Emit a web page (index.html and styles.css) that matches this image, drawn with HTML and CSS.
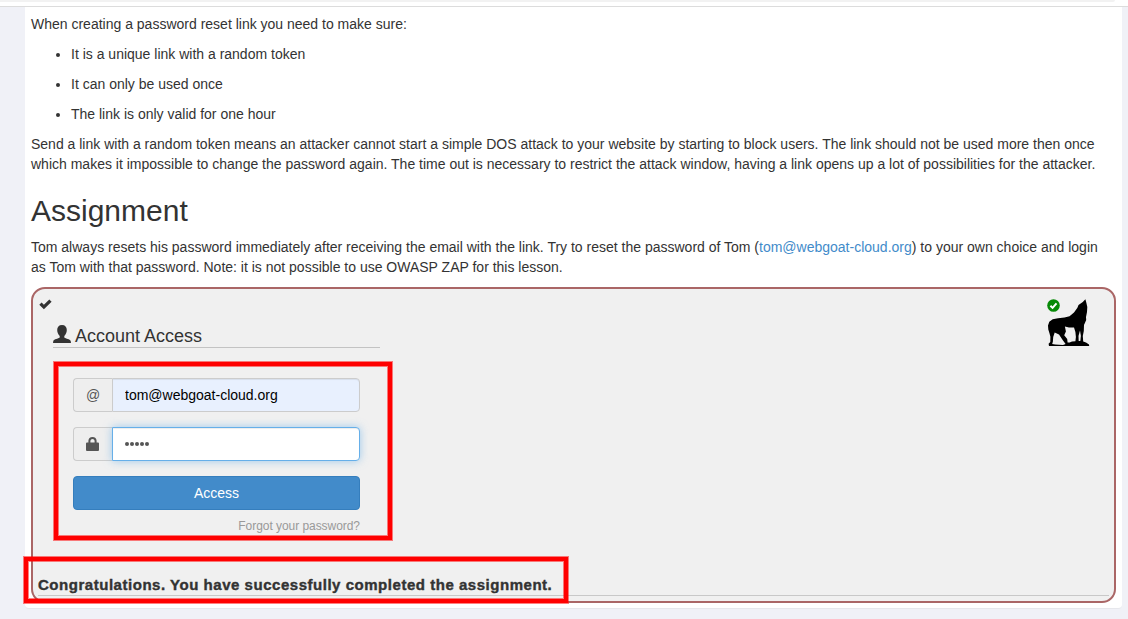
FILE: index.html
```
<!DOCTYPE html>
<html lang="en">
<head>
    <meta charset="UTF-8">
    <meta name="viewport" content="width=device-width, initial-scale=1.0">
    <title>Password reset</title>
    <link rel="stylesheet" href="styles.css">
</head>
<body>

<div class="topbar">
    <div class="topbar-inner"></div>
</div>

<div class="panel">
    <p>When creating a password reset link you need to make sure:</p>
    <ul>
        <li>It is a unique link with a random token</li>
        <li>It can only be used once</li>
        <li>The link is only valid for one hour</li>
    </ul>
    <p>Send a link with a random token means an attacker cannot start a simple DOS attack to your website by starting to block users. The link should not be used more then once<br>
    which makes it impossible to change the password again. The time out is necessary to restrict the attack window, having a link opens up a lot of possibilities for the attacker.</p>

    <h2>Assignment</h2>
    <p>Tom always resets his password immediately after receiving the email with the link. Try to reset the password of Tom (<a href="#">tom@webgoat-cloud.org</a>) to your own choice and login<br>
    as Tom with that password. Note: it is not possible to use OWASP ZAP for this lesson.</p>

    <div class="attack">
        <svg class="check" viewBox="0 0 13 11"><path d="M0.3 5.8 L2.6 3.5 L4.9 5.8 L10.3 0.5 L12.6 2.7 L4.9 10.3 Z"/></svg>

        <svg class="wolf" viewBox="0 0 44 50">
            <path d="M39.4 1.2 L40.4 5 L41.3 9 L41 14 L40 19 L40.2 22 L38 27 L37.8 33 L36.8 38 L37.2 43.4 L40 44.4 L43 46.5 L43.2 48 L3 48 L2.6 45.8 L4.3 44 L4.4 38.8 L3.4 35 L2.3 31.5 L2 27.5 L3.3 23.8 L6.7 21.3 L12 20.2 L18.5 19.4 L23.5 18.3 L28 14.5 L31.4 9.8 L32.5 7 L36.8 4 Z"/>
            <path class="gap" d="M18.9 28.4 L23 29.6 L28 29.6 L29.4 34 L29.9 39 L29.4 43.2 L26 43.6 L23.6 44.6 L21.6 44.4 L21.2 41 L18.2 37.2 L19.9 33.4 Z"/>
            <path class="gap" d="M8.7 34.6 L13 36.4 L17 42.4 L19.6 46 L17 47 L9.2 46.6 L6.2 46 L6.9 43.4 L7.2 39 Z"/>
            <path class="gap" d="M34 32.5 L34.9 38 L34.3 43 L32.7 43 L32.5 38 Z"/>
            <circle class="ok" cx="7.5" cy="7.5" r="6.3"/>
            <path class="tick" d="M4.4 7.7 L6.6 9.9 L10.5 5.4"/>
        </svg>

        <form class="login">
            <h4>
                <svg class="user" viewBox="0 0 18 18"><path d="M9 0 C12.2 0 13.8 2 13.8 5 C13.8 7.6 12.8 9.4 11.3 11 L11.3 12.4 C13 13.6 16.8 14 17.7 15.9 L18 18 L0 18 L0.3 15.9 C1.2 14 5 13.6 6.7 12.4 L6.7 11 C5.2 9.4 4.2 7.6 4.2 5 C4.2 2 5.8 0 9 0 Z"/></svg>
                <span>Account Access</span>
            </h4>
            <div class="fields">
                <div class="group">
                    <span class="addon">@</span>
                    <input class="email" type="text" value="tom@webgoat-cloud.org">
                </div>
                <div class="group">
                    <span class="addon"><svg class="lock" viewBox="0 0 13 14"><path fill-rule="evenodd" d="M0 6.5 Q0 5.5 1 5.5 L2.4 5.5 L2.4 3.8 Q2.6 0 6.5 0 Q10.4 0 10.6 3.8 L10.6 5.5 L12 5.5 Q13 5.5 13 6.5 L13 13 Q13 14 12 14 L1 14 Q0 14 0 13 Z M4.4 5.5 L8.6 5.5 L8.6 3.8 Q8.4 1.9 6.5 1.9 Q4.6 1.9 4.4 3.8 Z"/></svg></span>
                    <div class="password"><i></i><i></i><i></i><i></i><i></i></div>
                </div>
                <button type="button">Access</button>
                <a class="forgot" href="#">Forgot your password?</a>
            </div>
        </form>

        <div class="feedback">Congratulations. You have successfully completed the assignment.</div>
    </div>
</div>

<!-- red highlights over the form and the message -->
<div class="mark mark-form"></div>
<div class="mark mark-message"></div>

</body>
</html>
```
FILE: styles.css
```
* {
    box-sizing: border-box;
}

body {
    margin: 0;
    height: 619px;
    overflow: hidden;
    background-color: #f0f1f7;
    color: #333;
    font-family: "Liberation Sans", Arial, sans-serif;
    font-size: 14px;
    line-height: 20px;
}

.topbar {
    height: 7px;
    background-color: white;
    border-bottom: 1px solid #dcdcdc;
}

.topbar-inner {
    width: 1115px;
    height: 2px;
    background-color: #f2f2f2;
    border-bottom-right-radius: 4px;
}

.panel {
    width: 1097px;
    height: 602px;
    margin-left: 25px;
    padding: 7px 6px 0;
    background-color: white;
    border-bottom: 1px solid #e6e7ec;
    border-radius: 0 0 4px 4px;
}

p {
    margin: 0 0 10px;
    white-space: nowrap;
}

ul {
    margin: 0;
    padding-left: 40px;
}

li {
    margin-bottom: 10px;
}

a {
    color: #428bca;
    text-decoration: none;
}

h2 {
    margin: 20px 0 10px;
    font-size: 30px;
    font-weight: normal;
    line-height: 33px;
}

.attack {
    position: relative;
    display: flex;
    flex-direction: column;
    width: 1085px;
    height: 316px;
    padding: 10px 5px 5px;
    background-color: #f0f0f0;
    border: 2px solid #a66;
    border-radius: 14px;
}

.check {
    width: 13px;
    height: 11px;
    margin-left: 1px;
    fill: #333;
}

.wolf {
    position: absolute;
    top: 9px;
    right: 24px;
    width: 44px;
    height: 50px;
}

.wolf .gap {
    fill: #f0f0f0;
}

.wolf .ok {
    fill: #078a07;
}

.wolf .tick {
    fill: none;
    stroke: white;
    stroke-width: 2;
}

.login {
    width: 327px;
    margin: 13px 0 0 15px;
}

h4 {
    display: flex;
    align-items: center;
    gap: 4px;
    height: 25px;
    margin: 0 0 30px;
    padding-top: 2px;
    border-bottom: 1px solid #c3c3c3;
    font-size: 18px;
    font-weight: normal;
}

.user {
    width: 18px;
    height: 18px;
    margin-top: -4px;
    fill: #333;
}

.fields {
    display: flex;
    flex-direction: column;
    gap: 15px;
    padding: 0 20px;
}

.group {
    display: flex;
    height: 34px;
}

.addon {
    display: flex;
    align-items: center;
    justify-content: center;
    width: 39px;
    background-color: #eee;
    border: 1px solid #ccc;
    border-right: none;
    border-radius: 4px 0 0 4px;
    color: #555;
}

.lock {
    width: 13px;
    height: 14px;
    margin-right: 2px;
    fill: #555;
}

.email, .password {
    flex: 1;
    min-width: 0;
    padding: 0 12px;
    border: 1px solid #ccc;
    border-radius: 0 4px 4px 0;
    box-shadow: inset 0 1px 1px rgba(0, 0, 0, 0.075);
}

.email {
    background-color: #e8f0fe;
    color: black;
    font-family: inherit;
    font-size: 14px;
}

.password {
    display: flex;
    align-items: center;
    gap: 1px;
    background-color: white;
    border-color: #66afe9;
    box-shadow: inset 0 1px 1px rgba(0, 0, 0, 0.075), 0 0 8px rgba(102, 175, 233, 0.6);
}

.password i {
    width: 4px;
    height: 4px;
    border-radius: 50%;
    background-color: #555;
}

button {
    height: 34px;
    padding: 0;
    background-color: #428bca;
    border: 1px solid #357ebd;
    border-radius: 4px;
    color: white;
    font-family: inherit;
    font-size: 14px;
}

.forgot {
    margin-top: -9px;
    color: #999;
    font-size: 12px;
    letter-spacing: -0.05px;
    text-align: right;
}

.feedback {
    height: 21px;
    margin-top: auto;
    border-bottom: 1px solid #c8c8c8;
    font-size: 15px;
    font-weight: bold;
    line-height: 20px;
    letter-spacing: 0.53px;
    -webkit-text-stroke: 0.4px #333;
}

.mark {
    position: absolute;
    border: 4px solid red;
    box-shadow: 0 0 0 1px rgba(255, 0, 0, 0.5), inset 0 0 0 1px rgba(255, 0, 0, 0.5);
}

.mark-form {
    left: 54px;
    top: 362px;
    width: 338px;
    height: 178px;
}

.mark-message {
    left: 24px;
    top: 557px;
    width: 544px;
    height: 46px;
}
```
